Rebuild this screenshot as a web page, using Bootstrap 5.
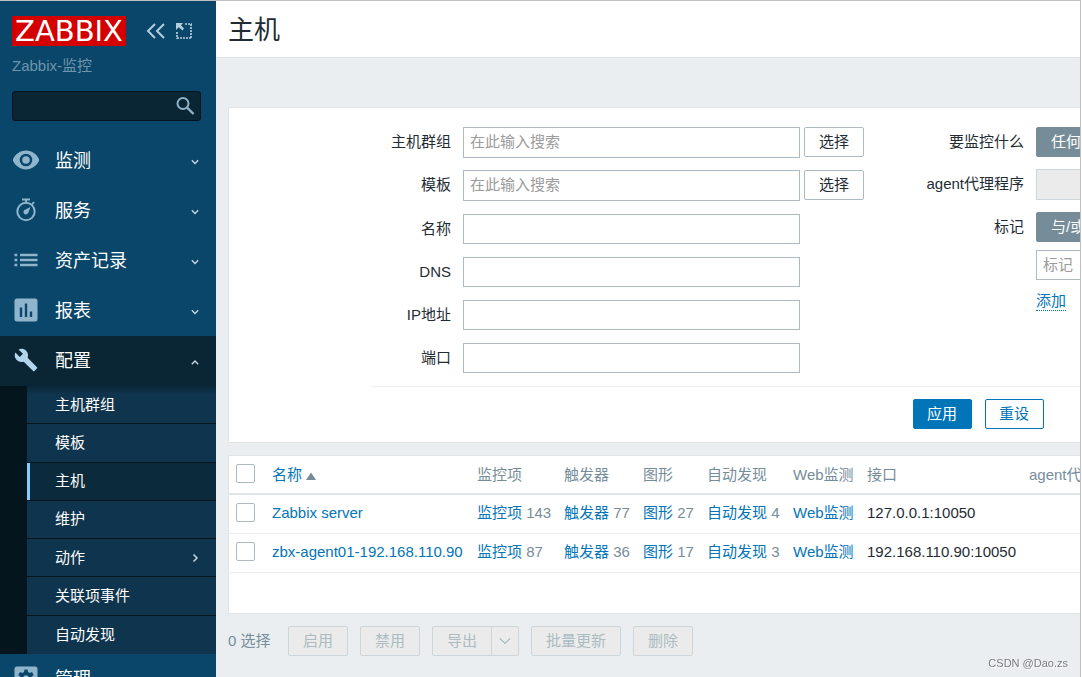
<!DOCTYPE html>
<html lang="zh-CN">
<head>
<meta charset="utf-8">
<meta name="viewport" content="width=device-width, initial-scale=1">
<title>主机</title>
<link href="https://cdn.jsdelivr.net/npm/bootstrap@5.3.0/dist/css/bootstrap.min.css" rel="stylesheet">
<style>
:root{--edge:#dfe4e7;--field:#acbbc2;--muted:#768d99;--brand:#0275b8;--ink:#1f2c33}
body{font-family:"Liberation Sans","Noto Sans CJK SC",sans-serif;font-size:15px;line-height:20px;color:var(--ink);background:#fff}
a{color:var(--brand);text-decoration:none}
.app-frame{height:100vh;border-top:1px solid #c0c0c0;border-right:1px solid #c0c0c0;margin-right:1px;background:#ebeef0}
/* sidebar */
.side{width:216px;background:#0a466a}
.side-top{padding:15px 15px 15px 12px}
.logo-text{background:#d40000;color:#fff;font:29px/30px "DejaVu Sans",sans-serif;width:114px;height:30px;text-align:center}
.icon-btn{border:0;padding:0;background:none;color:#b4cddc;display:flex}
.top-icons{gap:10px;margin-left:20px}
.server-name{color:#6f95ab;margin-top:10px}
.side-search{margin-top:15px}
.side-search input{height:30px;width:100%;background:#0a2635;border:1px solid #04131c;border-radius:3px;color:#fff;padding:0 34px 0 8px}
.side-search button{position:absolute;right:6px;top:5px;color:#8fb2c7}
.menu-item{height:50px;padding:0 16px 0 13px;color:#fff;font-size:18px;line-height:24px;gap:16px}
.menu-item svg:first-child{color:#8fb5cd;margin-bottom:2px}
.menu-item svg:last-child{color:#c5d6e0}
.menu-item.open{background:#0a2635}
.menu-item.open svg:first-child{color:#b3d5ec}
.submenu{display:grid;grid-auto-rows:1fr;min-height:268px;border-left:27px solid #05151e;background:#0f344d;position:relative}
.submenu::before{content:"";position:absolute;inset:0 0 auto;height:8px;background:linear-gradient(rgba(5,21,30,.45),transparent)}
.submenu a{color:#fff;padding:0 16px 0 28px;border-bottom:1px solid #05151e}
.submenu a:last-child{border-bottom:0}
.submenu a.current{background:linear-gradient(90deg,#80ccff 3px,#0b2a3c 3px)}
/* content */
.title-bar{background:#fff;border-bottom:1px solid var(--edge);height:57px;padding:0 12px;margin-bottom:49px}
.title-bar h1{font-size:26px;line-height:36px;margin:0;padding-top:1px;font-weight:400}
.wide{min-width:1500px;margin:0 12px}
.panel{background:#fff;border:1px solid var(--edge)}
.filter-panel{padding:19px 143px 13px;margin-bottom:12px}
.stack{display:flex;flex-direction:column;gap:13px}
.stack.tight{gap:12px}
.right-col{margin-left:20px}
.field-row{display:flex}
.field-row>label,.field-row>.cap{text-align:right;margin-right:12px;line-height:30px;width:79px}
.right-col .field-row>label,.right-col .field-row>.cap{width:140px}
.z-input{width:337px;height:30px;border:1px solid var(--field);border-radius:0;padding:0 6px 2px;background:#fff;color:var(--ink)}
.z-input.multi{height:31px}
.z-input.tag-name{margin:8px 0 11px}
.z-input::placeholder{color:#9b9b9b;opacity:1}
.z-btn{height:30px;border-radius:2px;border:1px solid var(--field);background:#fff;color:var(--ink);font-size:15px;line-height:20px;padding:0 14px;--bs-btn-border-radius:2px}
.filter-foot .z-btn{width:59px;padding:0}
.z-btn.solid{background:var(--brand);border-color:var(--brand);color:#fff}
.z-btn.ghost{border-color:var(--brand);color:var(--brand)}
.z-btn.seg{background:var(--muted);border-color:var(--muted);color:#fff}
.z-btn:disabled{background:#ebebeb;border-color:#ccd5d9;color:var(--field);opacity:1}
.z-select{width:230px;height:31px;border:1px solid #ccd5d9;background:#ebebeb;border-radius:0;appearance:none}
.add-link{border-bottom:1px dotted var(--brand);line-height:19px}
.filter-foot{border-top:1px solid #ebeef0;padding-top:12px;margin-top:13px;gap:13px}
.host-panel{padding-bottom:40px;margin-bottom:12px}
.host-table{table-layout:fixed;width:100%;border-collapse:separate;border-spacing:0}
.host-table th{font-weight:400;color:var(--muted);height:39px;border-bottom:2px solid var(--edge);padding:0;white-space:nowrap}
.host-table td{height:39px;border-bottom:1px solid #ebeef0;padding:0 0 2px;white-space:nowrap;color:var(--muted)}
.host-table td.addr{color:var(--ink)}
.host-table .form-check-input{width:19px;height:19px;margin:0 0 2px 7px;border:1px solid var(--field);border-radius:2px;display:block}
.c-check{width:43px}.c-name{width:205px}.c-item{width:87px}.c-trig{width:79px}.c-graph{width:64px}.c-disc{width:86px}.c-web{width:74px}.c-addr{width:162px}
.bulk{gap:12px}
.bulk .count{color:var(--muted);width:48px}
.bulk .caret{width:28px;padding:0;margin-left:-1px;display:flex;align-items:center;justify-content:center}
.credit{position:fixed;right:14px;bottom:7px;font-size:11px;line-height:14px;color:#777b7e;text-shadow:1px 1px 0 #fff}
</style>
</head>
<body>
<div class="app-frame d-flex overflow-hidden">
  <aside class="side flex-shrink-0 overflow-hidden">
    <div class="side-top">
      <div class="d-flex align-items-center">
        <div class="logo-text">ZABBIX</div>
        <div class="top-icons d-flex align-items-center">
          <button class="icon-btn" aria-label="收起"><svg width="20" height="18" viewBox="0 0 20 18" fill="none" stroke="currentColor" stroke-width="2"><path d="M9 2 2 9l7 7M18 2l-7 7 7 7"/></svg></button>
          <button class="icon-btn" aria-label="全屏"><svg width="16" height="16" viewBox="0 0 16 16" fill="none" stroke="currentColor"><path d="M9 1h7M15 1v15M1 9v7M1 15h15" stroke-width="1.700" stroke-dasharray="2 1"/><path d="M0 0h7L5 2.200 8 5.500 6.500 7.500 2.800 4.300 0 7z" fill="currentColor" stroke="none"/></svg></button>
        </div>
      </div>
      <div class="server-name">Zabbix-监控</div>
      <form class="side-search position-relative">
        <input type="text" aria-label="搜索">
        <button type="button" class="icon-btn" aria-label="搜索"><svg width="20" height="20" viewBox="0 0 20 20" fill="none" stroke="currentColor" stroke-width="2"><circle cx="8" cy="7.500" r="5.500"/><path d="m12 11.500 6.500 6.500" stroke-width="2.400"/></svg></button>
      </form>
    </div>
    <nav>
      <a href="#" class="menu-item d-flex align-items-center"><svg width="26" height="26" viewBox="0 0 26 26" fill="currentColor"><path fill-rule="evenodd" d="M13 3.500C6.800 3.500 2 7.500-.500 13 2 18.500 6.800 22.500 13 22.500S24 18.500 26.500 13C24 7.500 19.200 3.500 13 3.500zm0 3.200a6.300 6.300 0 1 1 0 12.600 6.300 6.300 0 0 1 0-12.600z"/><circle cx="13" cy="13" r="3.800"/></svg><span>监测</span><svg class="ms-auto" width="10" height="8" viewBox="1 0 10 8" fill="none" stroke="currentColor" stroke-width="1.400"><path d="m2.800 3.300 3.200 3.200 3.200-3.200"/></svg></a>
      <a href="#" class="menu-item d-flex align-items-center"><svg width="26" height="26" viewBox="0 0 26 26" fill="none" stroke="currentColor"><circle cx="13" cy="14.500" r="8.700" stroke-width="2"/><path d="M9 2.500h8M13 3v3M19 7.500l2-2.500" stroke-width="2"/><path d="m17.500 10-2.200 5.800a2.500 2.500 0 1 1-3.800-2.900z" fill="currentColor" stroke="none"/></svg><span>服务</span><svg class="ms-auto" width="10" height="8" viewBox="1 0 10 8" fill="none" stroke="currentColor" stroke-width="1.400"><path d="m2.800 3.300 3.200 3.200 3.200-3.200"/></svg></a>
      <a href="#" class="menu-item d-flex align-items-center"><svg width="26" height="26" viewBox="0 0 26 26" stroke="currentColor" stroke-width="2.400"><path d="M1.500 8h2.800M1.500 13h2.800M1.500 18h2.800M7 8h17.500M7 13h17.500M7 18h17.500"/></svg><span>资产记录</span><svg class="ms-auto" width="10" height="8" viewBox="1 0 10 8" fill="none" stroke="currentColor" stroke-width="1.400"><path d="m2.800 3.300 3.200 3.200 3.200-3.200"/></svg></a>
      <a href="#" class="menu-item d-flex align-items-center"><svg width="26" height="26" viewBox="0 0 26 26" fill="currentColor"><path fill-rule="evenodd" d="M4 1.500h18a2.500 2.500 0 0 1 2.500 2.500v18a2.500 2.500 0 0 1-2.500 2.500H4A2.500 2.500 0 0 1 1.500 22V4A2.500 2.500 0 0 1 4 1.500zM6.800 10.500V20h2.400v-9.500zM11.800 6.500V20h2.400V6.500zM16.800 14.500V20h2.400v-5.500z"/></svg><span>报表</span><svg class="ms-auto" width="10" height="8" viewBox="1 0 10 8" fill="none" stroke="currentColor" stroke-width="1.400"><path d="m2.800 3.300 3.200 3.200 3.200-3.200"/></svg></a>
      <a href="#" class="menu-item open d-flex align-items-center"><svg width="26" height="26" viewBox="-0.700 -0.700 25.400 25.400" fill="currentColor"><path d="M22.700 19l-9.100-9.100c.9-2.300.4-5-1.500-6.900-2-2-5-2.400-7.400-1.300L9 6 6 9 1.600 4.700C.4 7.100.9 10.100 2.900 12.100c1.900 1.900 4.600 2.400 6.900 1.500l9.100 9.100c.4.400 1 .4 1.400 0l2.300-2.300c.5-.4.5-1.100.1-1.400z"/></svg><span>配置</span><svg class="ms-auto" width="10" height="8" viewBox="1 0 10 8" fill="none" stroke="currentColor" stroke-width="1.400"><path d="M2.800 7.200 6 4l3.200 3.200"/></svg></a>
      <div class="submenu">
        <a href="#" class="d-flex align-items-center">主机群组</a>
        <a href="#" class="d-flex align-items-center">模板</a>
        <a href="#" class="current d-flex align-items-center">主机</a>
        <a href="#" class="d-flex align-items-center">维护</a>
        <a href="#" class="d-flex align-items-center">动作<svg class="ms-auto" width="10" height="12" viewBox="1 0 10 12" fill="none" stroke="#c5d6e0" stroke-width="1.500"><path d="M4.500 2.500 8 6 4.500 9.500"/></svg></a>
        <a href="#" class="d-flex align-items-center">关联项事件</a>
        <a href="#" class="d-flex align-items-center">自动发现</a>
      </div>
      <a href="#" class="menu-item d-flex align-items-center"><svg width="26" height="26" viewBox="0 0 26 26" fill="currentColor"><path fill-rule="evenodd" d="M4 1.500h18a2.500 2.500 0 0 1 2.500 2.500v18a2.500 2.500 0 0 1-2.500 2.500H4A2.500 2.500 0 0 1 1.500 22V4A2.500 2.500 0 0 1 4 1.500zM11.500 4.500 11 7 9.300 8 7 7 5.300 10l2 1.700v2.600l-2 1.700L7 19l2.300-1 1.700 1 .5 2.500h3L15 19l1.700-1 2.300 1 1.700-3-2-1.700v-2.600l2-1.700L19 7l-2.300 1L15 7l-.5-2.500z"/><circle cx="13" cy="13" r="2.800"/></svg><span>管理</span></a>
    </nav>
  </aside>

  <main class="flex-grow-1 overflow-hidden">
    <header class="title-bar d-flex align-items-center"><h1>主机</h1></header>
    <div class="wide">
      <form class="panel filter-panel">
        <div class="d-flex">
          <div class="stack left-col">
            <div class="stack tight">
              <div class="field-row"><label for="groups">主机群组</label><input id="groups" class="z-input multi" type="text" placeholder="在此输入搜索"><button type="button" class="btn z-btn ms-1">选择</button></div>
              <div class="field-row"><label for="tpl">模板</label><input id="tpl" class="z-input multi" type="text" placeholder="在此输入搜索"><button type="button" class="btn z-btn ms-1">选择</button></div>
            </div>
            <div class="field-row"><label for="hname">名称</label><input id="hname" class="z-input" type="text"></div>
            <div class="field-row"><label for="dns">DNS</label><input id="dns" class="z-input" type="text"></div>
            <div class="field-row"><label for="ip">IP地址</label><input id="ip" class="z-input" type="text"></div>
            <div class="field-row"><label for="port">端口</label><input id="port" class="z-input" type="text"></div>
          </div>
          <div class="stack tight right-col">
            <div class="field-row"><span class="cap">要监控什么</span><button type="button" class="btn z-btn seg">任何</button></div>
            <div class="field-row"><label for="proxy">agent代理程序</label><select id="proxy" class="z-select" disabled></select></div>
            <div class="field-row"><span class="cap">标记</span>
              <div class="d-flex flex-column align-items-start">
                <button type="button" class="btn z-btn seg">与/或</button>
                <input class="z-input tag-name" type="text" placeholder="标记" aria-label="标记">
                <a href="#" class="add-link">添加</a>
              </div>
            </div>
          </div>
        </div>
        <div class="filter-foot d-flex justify-content-center">
          <button type="button" class="btn z-btn solid">应用</button>
          <button type="button" class="btn z-btn ghost">重设</button>
        </div>
      </form>

      <section class="panel host-panel">
        <table class="host-table">
          <colgroup><col class="c-check"><col class="c-name"><col class="c-item"><col class="c-trig"><col class="c-graph"><col class="c-disc"><col class="c-web"><col class="c-addr"><col></colgroup>
          <thead><tr><th><input type="checkbox" class="form-check-input" aria-label="全选"></th><th><a href="#">名称 <svg width="10" height="8" viewBox="0 0 10 8" fill="#768d99"><path d="M5 0.500 10 8H0z"/></svg></a></th><th>监控项</th><th>触发器</th><th>图形</th><th>自动发现</th><th>Web监测</th><th>接口</th><th>agent代理程序</th></tr></thead>
          <tbody>
            <tr><td><input type="checkbox" class="form-check-input" aria-label="Zabbix server"></td><td><a href="#">Zabbix server</a></td><td><a href="#">监控项</a> 143</td><td><a href="#">触发器</a> 77</td><td><a href="#">图形</a> 27</td><td><a href="#">自动发现</a> 4</td><td><a href="#">Web监测</a></td><td class="addr">127.0.0.1:10050</td><td></td></tr>
            <tr><td><input type="checkbox" class="form-check-input" aria-label="zbx-agent01-192.168.110.90"></td><td><a href="#">zbx-agent01-192.168.110.90</a></td><td><a href="#">监控项</a> 87</td><td><a href="#">触发器</a> 36</td><td><a href="#">图形</a> 17</td><td><a href="#">自动发现</a> 3</td><td><a href="#">Web监测</a></td><td class="addr">192.168.110.90:10050</td><td></td></tr>
          </tbody>
        </table>
      </section>

      <div class="bulk d-flex align-items-center">
        <span class="count text-nowrap">0 选择</span>
        <button class="btn z-btn" disabled>启用</button>
        <button class="btn z-btn" disabled>禁用</button>
        <div class="d-flex"><button class="btn z-btn rounded-end-0" disabled>导出</button><button class="btn z-btn caret rounded-start-0" disabled aria-label="更多"><svg width="12" height="8" viewBox="0 0 12 8" fill="none" stroke="currentColor" stroke-width="1.200"><path d="m1 1.500 5 5 5-5"/></svg></button></div>
        <button class="btn z-btn" disabled>批量更新</button>
        <button class="btn z-btn" disabled>删除</button>
      </div>
    </div>
  </main>
</div>
<div class="credit">CSDN @Dao.zs</div>
<script src="https://cdn.jsdelivr.net/npm/bootstrap@5.3.0/dist/js/bootstrap.bundle.min.js"></script>
</body>
</html>
